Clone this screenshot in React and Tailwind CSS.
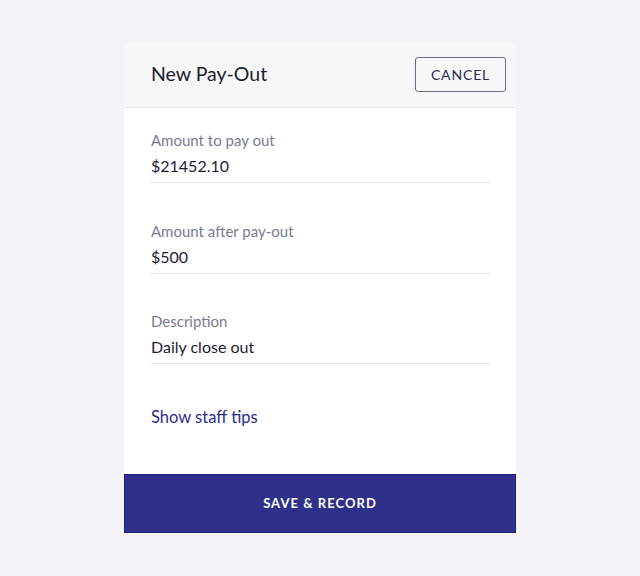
export default function App() {
  const fields = [
    { label: "Amount to pay out", value: "$21452.10" },
    { label: "Amount after pay-out", value: "$500" },
    { label: "Description", value: "Daily close out" },
  ];

  return (
    <div
      className="w-[640px] h-[576px] bg-[#f3f2f7] pt-[42px] flex justify-center"
      style={{ fontFamily: "Lato, 'Open Sans', sans-serif" }}
    >
      <div className="w-[392px] h-[491px] bg-white flex flex-col">
        {/* header */}
        <div className="h-[66px] bg-[#f7f7f8] border-b border-[#e3e3e8] flex items-center justify-between pl-[27px] pr-[10px]">
          <div className="text-[19.5px] text-[#1c1c30] -mt-[2px]">New Pay-Out</div>
          <button className="w-[91px] h-[35px] border border-[#6e6d85] rounded-[3px] text-[14px] tracking-[0.06em] text-[#2c2c55]">
            CANCEL
          </button>
        </div>

        <div className="flex-1 pl-[27px] pr-[26px] pt-[22px]">
          {fields.map((f) => (
            <div key={f.label} className="mb-[37.5px]">
              <div className="text-[15px] leading-[20px] text-[#7b7a92]">{f.label}</div>
              <div className="text-[16px] leading-[24px] mt-[4px] pb-[4px] text-[#1c1c35] border-b border-[#e2e2e6]">
                {f.value}
              </div>
            </div>
          ))}
          <div className="text-[16.5px] text-[#2a2c8c] pt-[3px]">Show staff tips</div>
        </div>

        <button className="h-[59px] bg-[#2e3089] border border-[#1d1f7a] text-white text-[13px] font-bold tracking-[0.08em]">
          SAVE &amp; RECORD
        </button>
      </div>
    </div>
  );
}
